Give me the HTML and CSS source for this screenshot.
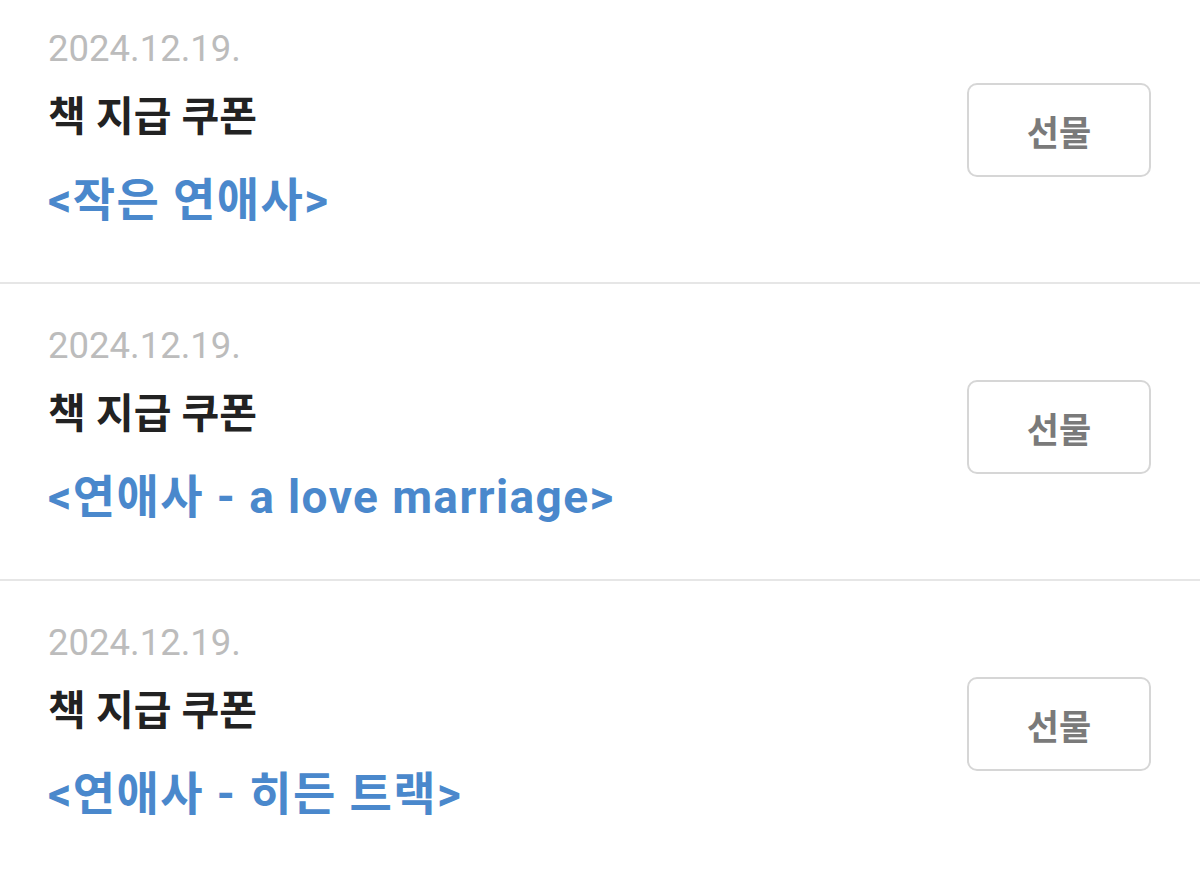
FILE: index.html
```html
<!DOCTYPE html>
<html lang="ko">
<head>
<meta charset="utf-8">
<link rel="stylesheet" href="styles.css">
</head>
<body>
<div class="list">
  <div class="row">
    <div class="info">
      <div class="date">2024.12.19.</div>
      <div class="title">책 지급 쿠폰</div>
      <div class="book">&lt;작은 연애사&gt;</div>
    </div>
    <button class="gift">선물</button>
  </div>
  <div class="row">
    <div class="info">
      <div class="date">2024.12.19.</div>
      <div class="title">책 지급 쿠폰</div>
      <div class="book">&lt;연애사 - a love marriage&gt;</div>
    </div>
    <button class="gift">선물</button>
  </div>
  <div class="row">
    <div class="info">
      <div class="date">2024.12.19.</div>
      <div class="title">책 지급 쿠폰</div>
      <div class="book">&lt;연애사 - 히든 트랙&gt;</div>
    </div>
    <button class="gift">선물</button>
  </div>
</div>
</body>
</html>
```

FILE: styles.css
```css
html, body {
  margin: 0;
  padding: 0;
  background: #ffffff;
  overflow: hidden;
}
body {
  width: 1200px;
  height: 870px;
  font-family: Roboto, "Noto Sans CJK KR", sans-serif;
}
.list {
  margin-top: -13px;
}
.row {
  display: flex;
  justify-content: space-between;
  align-items: flex-start;
  padding: 37px 49px 49px 48px;
  border-bottom: 2px solid #e6e6e6;
}
.info {
  display: flex;
  flex-direction: column;
}
.date {
  font-size: 36.5px;
  line-height: 50px;
  color: #bcbcbc;
}
.title {
  margin-top: 13px;
  font-size: 41px;
  line-height: 60px;
  font-weight: 700;
  color: #222222;
}
.book {
  margin-top: 20px;
  font-size: 46px;
  line-height: 66px;
  font-weight: 700;
  color: #4a88cc;
  letter-spacing: 1.4px;
}
.gift {
  margin-top: 59px;
  width: 184px;
  height: 94px;
  border: 2px solid #d6d6d6;
  border-radius: 10px;
  background: #ffffff;
  font-family: "Noto Sans CJK KR", sans-serif;
  font-size: 35px;
  font-weight: 700;
  color: #7a7a7a;
  padding: 0;
}
```
